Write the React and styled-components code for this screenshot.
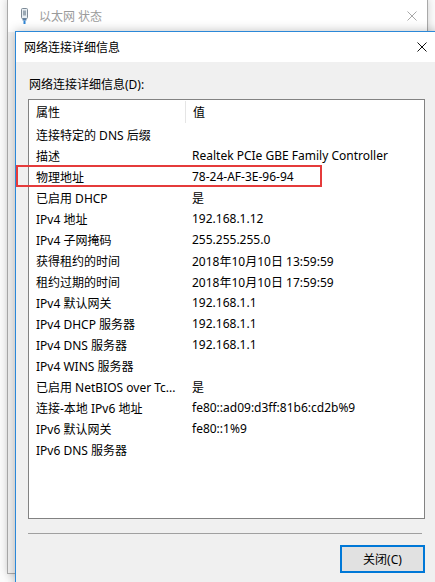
import React from "react";
import styled, { createGlobalStyle } from "styled-components";

const GlobalStyle = createGlobalStyle`
 html, body {
  margin: 0;
  padding: 0;
  background: #fbfbfb;
  overflow: hidden;
 }
 body {
  font-family: "Segoe UI", "Noto Sans", "Noto Sans CJK SC", sans-serif;
  font-size: 12px;
  color: #000;
 }
`;

const rows = [
 ["连接特定的 DNS 后缀", ""],
 ["描述", "Realtek PCIe GBE Family Controller"],
 ["物理地址", "78-24-AF-3E-96-94", true],
 ["已启用 DHCP", "是"],
 ["IPv4 地址", "192.168.1.12"],
 ["IPv4 子网掩码", "255.255.255.0"],
 ["获得租约的时间", "2018年10月10日 13:59:59"],
 ["租约过期的时间", "2018年10月10日 17:59:59"],
 ["IPv4 默认网关", "192.168.1.1"],
 ["IPv4 DHCP 服务器", "192.168.1.1"],
 ["IPv4 DNS 服务器", "192.168.1.1"],
 ["IPv4 WINS 服务器", ""],
 ["已启用 NetBIOS over Tc...", "是"],
 ["连接-本地 IPv6 地址", "fe80::ad09:d3ff:81b6:cd2b%9"],
 ["IPv6 默认网关", "fe80::1%9"],
 ["IPv6 DNS 服务器", ""],
];

const CloseIcon = ({ color }) => (
 <svg width="10" height="10" viewBox="0 0 10 10">
  <path d="M0.5 0.5 L9.5 9.5 M9.5 0.5 L0.5 9.5" stroke={color} strokeWidth="1" />
 </svg>
);

const PlugIcon = () => (
 <svg width="7" height="16" viewBox="0 0 7 16">
  <rect x="0.5" y="0.5" width="6" height="10" rx="1" fill="#e8eef3" stroke="#7d8a96" />
  <rect x="2" y="2.5" width="3" height="5" fill="#9aa8b4" />
  <rect x="1.5" y="10.5" width="4" height="2" fill="#5b7ea3" />
  <rect x="2.5" y="12.5" width="2" height="3.5" fill="#2f86d6" />
 </svg>
);

const App = () => {
 return (
  <>
   <GlobalStyle />
   <Desktop>
    <OuterWindow>
     <OuterTitleBar>
      <PlugIcon />
      <OuterTitle>以太网 状态</OuterTitle>
      <TitleClose>
       <CloseIcon color="#a8a8a8" />
      </TitleClose>
     </OuterTitleBar>
    </OuterWindow>

    <Dialog>
     <TitleBar>
      <DialogTitle>网络连接详细信息</DialogTitle>
      <TitleClose>
       <CloseIcon color="#111" />
      </TitleClose>
     </TitleBar>
     <Body>
      <ListLabel>网络连接详细信息(D):</ListLabel>
      <ListBox>
       <HeaderRow>
        <HeaderCell $divider>属性</HeaderCell>
        <HeaderCell>值</HeaderCell>
       </HeaderRow>
       {rows.map(([name, value, marked]) => (
        <Row key={name}>
         <NameCell>{name}</NameCell>
         <ValueCell>{value}</ValueCell>
         {marked && <Highlight />}
        </Row>
       ))}
      </ListBox>
      <Separator />
      <ButtonBar>
       <CloseButton>关闭(C)</CloseButton>
      </ButtonBar>
     </Body>
    </Dialog>
   </Desktop>
  </>
 );
};

const Desktop = styled.div`
 position: relative;
 width: 435px;
 height: 582px;
 overflow: hidden;
`;

const OuterWindow = styled.div`
 position: absolute;
 left: 7px;
 top: -1px;
 width: 419px;
 height: 573px;
 background: #f0f0f0;
 border: 1px solid #a9a9a9;
 box-shadow: 0 0 8px rgba(0, 0, 0, 0.18);
`;

const OuterTitleBar = styled.div`
 display: flex;
 align-items: center;
 height: 32px;
 padding: 0 10px 0 13px;
 background: #fff;
`;

const OuterTitle = styled.span`
 flex: 1;
 margin-left: 11px;
 color: #9b9b9b;
 font-size: 12px;
`;

const TitleClose = styled.span`
 display: flex;
 align-items: center;
 justify-content: center;
 width: 10px;
 height: 10px;
`;

const Dialog = styled.div`
 position: absolute;
 left: 15px;
 top: 31px;
 width: 424px;
 height: 570px;
 display: flex;
 flex-direction: column;
 background: #f0f0f0;
 border: 1px solid #2b88d8;
 box-shadow: 0 0 10px rgba(0, 0, 0, 0.25);
`;

const TitleBar = styled.div`
 display: flex;
 align-items: center;
 height: 30px;
 padding: 0 13px 0 8px;
 background: #fff;
`;

const DialogTitle = styled.span`
 flex: 1;
 font-size: 12px;
 color: #000;
`;

const Body = styled.div`
 display: flex;
 flex-direction: column;
 padding: 15px 15px 0 12px;
`;

const ListLabel = styled.div`
 height: 16px;
 line-height: 16px;
 margin-left: 1px;
 margin-bottom: 6px;
`;

const ListBox = styled.div`
 height: 418px;
 background: #fff;
 border: 1px solid #828282;
`;

const HeaderRow = styled.div`
 display: grid;
 grid-template-columns: 157px 1fr;
 height: 24px;
`;

const HeaderCell = styled.div`
 display: flex;
 align-items: center;
 padding-left: 7px;
 margin: 1px 0;
 border-right: ${(p) => (p.$divider ? "1px solid #e5e5e5" : "none")};
`;

const Row = styled.div`
 position: relative;
 display: grid;
 grid-template-columns: 156px 1fr;
 align-items: center;
 height: 21px;
`;

const NameCell = styled.div`
 padding-left: 7px;
 white-space: nowrap;
 overflow: hidden;
`;

const ValueCell = styled.div`
 padding-left: 7px;
 white-space: nowrap;
`;

const Highlight = styled.div`
 position: absolute;
 left: -13px;
 top: -1px;
 width: 302px;
 height: 18px;
 border: 2px solid #e53b3b;
 pointer-events: none;
`;

const Separator = styled.div`
 height: 1px;
 margin: 14px 3px 0 0;
 background: #a0a0a0;
`;

const ButtonBar = styled.div`
 display: flex;
 justify-content: flex-end;
 margin-top: 11px;
`;

const CloseButton = styled.button`
 width: 85px;
 height: 28px;
 padding: 0;
 background: #e1e1e1;
 border: 2px solid #0078d7;
 font-family: inherit;
 font-size: 12px;
 color: #000;
`;

export default App;
